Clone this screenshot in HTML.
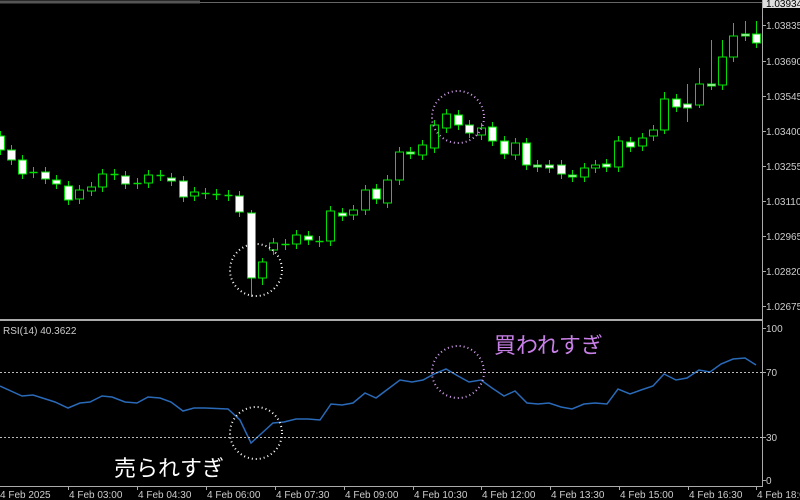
<!DOCTYPE html>
<html><head><meta charset="utf-8"><style>
html,body{margin:0;padding:0;background:#000;width:800px;height:500px;overflow:hidden}
svg{display:block}
text{font-family:"Liberation Sans","Noto Sans CJK JP",sans-serif}
</style></head><body>
<svg id="s" width="800" height="500" xmlns="http://www.w3.org/2000/svg">
<rect width="800" height="500" fill="#000"/>
<line x1="0" y1="2" x2="200" y2="2" stroke="#555" stroke-width="3"/>
<line x1="200" y1="2.5" x2="762" y2="2.5" stroke="#666" stroke-width="1"/>
<line x1="762.5" y1="0" x2="762.5" y2="486" stroke="#aaa" stroke-width="1"/>
<rect x="0" y="319" width="763" height="2" fill="#aaa"/>
<line x1="0" y1="486.5" x2="763" y2="486.5" stroke="#aaa" stroke-width="1"/>
<rect x="763" y="0" width="37" height="8" fill="#ddd"/>
<text x="766" y="7" font-size="10" fill="#000">1.03934</text>
<g id="g"></g>
<line x1="0" y1="372.5" x2="762" y2="372.5" stroke="#bbb" stroke-width="1" stroke-dasharray="2,2"/>
<line x1="0" y1="437.5" x2="762" y2="437.5" stroke="#bbb" stroke-width="1" stroke-dasharray="2,2"/>
<text x="3" y="334" font-size="10" fill="#ccc">RSI(14) 40.3622</text>
<circle cx="256" cy="270" r="26" fill="none" stroke="#fff" stroke-width="2" stroke-dasharray="1,3"/>
<circle cx="256" cy="433" r="26" fill="none" stroke="#fff" stroke-width="2" stroke-dasharray="1,3"/>
<circle cx="458" cy="117" r="26" fill="none" stroke="#d7a0f0" stroke-width="2" stroke-dasharray="1,3"/>
<circle cx="458" cy="372" r="26" fill="none" stroke="#d7a0f0" stroke-width="2" stroke-dasharray="1,3"/>
<text x="114" y="476" font-size="22" fill="#fff">売られすぎ</text>
<text x="494" y="353" font-size="22" fill="#c880e8">買われすぎ</text>
</svg>
<script>
var g=document.getElementById('g'),h='';
var C=[[0,136,150,1],[11,150,160,1],[22,160,174,1],[33,172,173,0],[45,172,179,1],[56,180,184,1],[68,186,200,1],[79,190,199,0],[91,187,191,0],[102,174,187,0],[114,174,175,0],[125,176,184,1],[137,183,184,0],[148,175,183,0],[160,175,176,0],[171,178,181,1],[183,181,197,1],[194,192,196,0],[205,193,194,0],[216,194,195,0],[228,195,196,0],[239,196,212,1],[251,213,278,1],[262,262,278,0],[273,243,250,0],[285,244,245,0],[296,235,244,0],[308,236,240,1],[319,241,242,0],[330,211,241,0],[342,213,216,1],[353,210,215,0],[365,190,210,0],[376,189,199,1],[387,180,203,0],[399,152,180,0],[410,152,154,1],[422,145,155,0],[434,125,148,0],[446,114,128,0],[458,115,125,1],[469,125,133,1],[481,128,135,0],[492,127,141,1],[504,141,154,1],[515,143,155,0],[526,143,165,1],[537,165,167,1],[549,165,168,1],[561,165,174,1],[572,175,177,1],[584,168,177,0],[595,165,168,0],[606,164,167,1],[618,141,167,0],[630,142,147,1],[642,138,146,0],[653,130,136,0],[664,99,130,0],[676,99,107,1],[687,104,108,1],[699,84,105,0],[711,84,86,1],[722,57,85,0],[733,36,57,0],[745,34,36,1],[756,34,43,1]];
var W={251:[210,297],262:[258,285],718:[40,90],730:[40,62],711:[40,90],699:[68,108],687:[84,122],664:[92,134]};
C.forEach(function(c){var x=c[0]+0.5,t=c[1],b=c[2],hi=t-5,lo=b+5;if(W[c[0]]){hi=W[c[0]][0];lo=W[c[0]][1];}
if(c[0]==711)hi=40;if(c[0]==722){hi=40;}if(c[0]==745||c[0]==756){hi=21;}if(c[0]==733)hi=23;
h+='<line x1="'+x+'" y1="'+hi+'" x2="'+x+'" y2="'+lo+'" stroke="#00e000" stroke-width="1"/>';
if(c[3])h+='<rect x="'+(c[0]-3.5)+'" y="'+t+'" width="8" height="'+Math.max(2,b-t)+'" fill="#fff" stroke="#00e000" stroke-width="1"/>';
else if(b-t<=2)h+='<line x1="'+(c[0]-3.5)+'" y1="'+(t+.5)+'" x2="'+(c[0]+4.5)+'" y2="'+(t+.5)+'" stroke="#00e000" stroke-width="1.5"/>';
else h+='<rect x="'+(c[0]-3.5)+'" y="'+t+'" width="8" height="'+(b-t)+'" fill="#000" stroke="#00e000" stroke-width="1"/>';});
var P=[[0,386],[22,396],[33,395],[55,402],[68,408],[80,403],[90,402],[102,396],[112,397],[125,402],[137,403],[148,397],[160,398],[171,402],[183,411],[194,408],[205,408],[228,409],[240,420],[251,443],[262,433],[273,423],[284,422],[296,419],[308,419],[320,420],[331,404],[342,405],[353,403],[365,393],[376,398],[400,380],[412,382],[423,380],[434,374],[446,369],[458,376],[469,382],[481,380],[492,388],[504,396],[515,391],[527,403],[538,404],[549,403],[561,407],[572,409],[584,404],[595,403],[607,404],[618,389],[630,394],[641,390],[653,386],[664,374],[676,380],[687,378],[699,370],[710,372],[721,364],[733,359],[745,358],[756,365]];
h+='<polyline fill="none" stroke="#2a6ab8" stroke-width="1.5" points="'+P.map(function(p){return p.join(',')}).join(' ')+'"/>';
var L=[["1.03835",25],["1.03690",61],["1.03545",96],["1.03400",131],["1.03255",166],["1.03110",201],["1.02965",236],["1.02820",271],["1.02675",306],["100",328],["70",372],["30",437],["0",480]];
L.forEach(function(l){h+='<line x1="762" y1="'+(l[1]+.5)+'" x2="766" y2="'+(l[1]+.5)+'" stroke="#aaa"/><text x="766" y="'+(l[1]+4)+'" font-size="10" fill="#ccc">'+l[0]+'</text>';});
var T=[["4 Feb 2025",-2],["4 Feb 03:00",67],["4 Feb 04:30",136],["4 Feb 06:00",205],["4 Feb 07:30",274],["4 Feb 09:00",343],["4 Feb 10:30",412],["4 Feb 12:00",480],["4 Feb 13:30",549],["4 Feb 15:00",618],["4 Feb 16:30",687],["4 Feb 18:00",755]];
T.forEach(function(t){h+='<line x1="'+(t[1]+1.5)+'" y1="486" x2="'+(t[1]+1.5)+'" y2="490" stroke="#aaa"/><text x="'+(t[1]+2)+'" y="498" font-size="10" fill="#ccc">'+t[0]+'</text>';});
g.innerHTML=h;
</script>
</body></html>
